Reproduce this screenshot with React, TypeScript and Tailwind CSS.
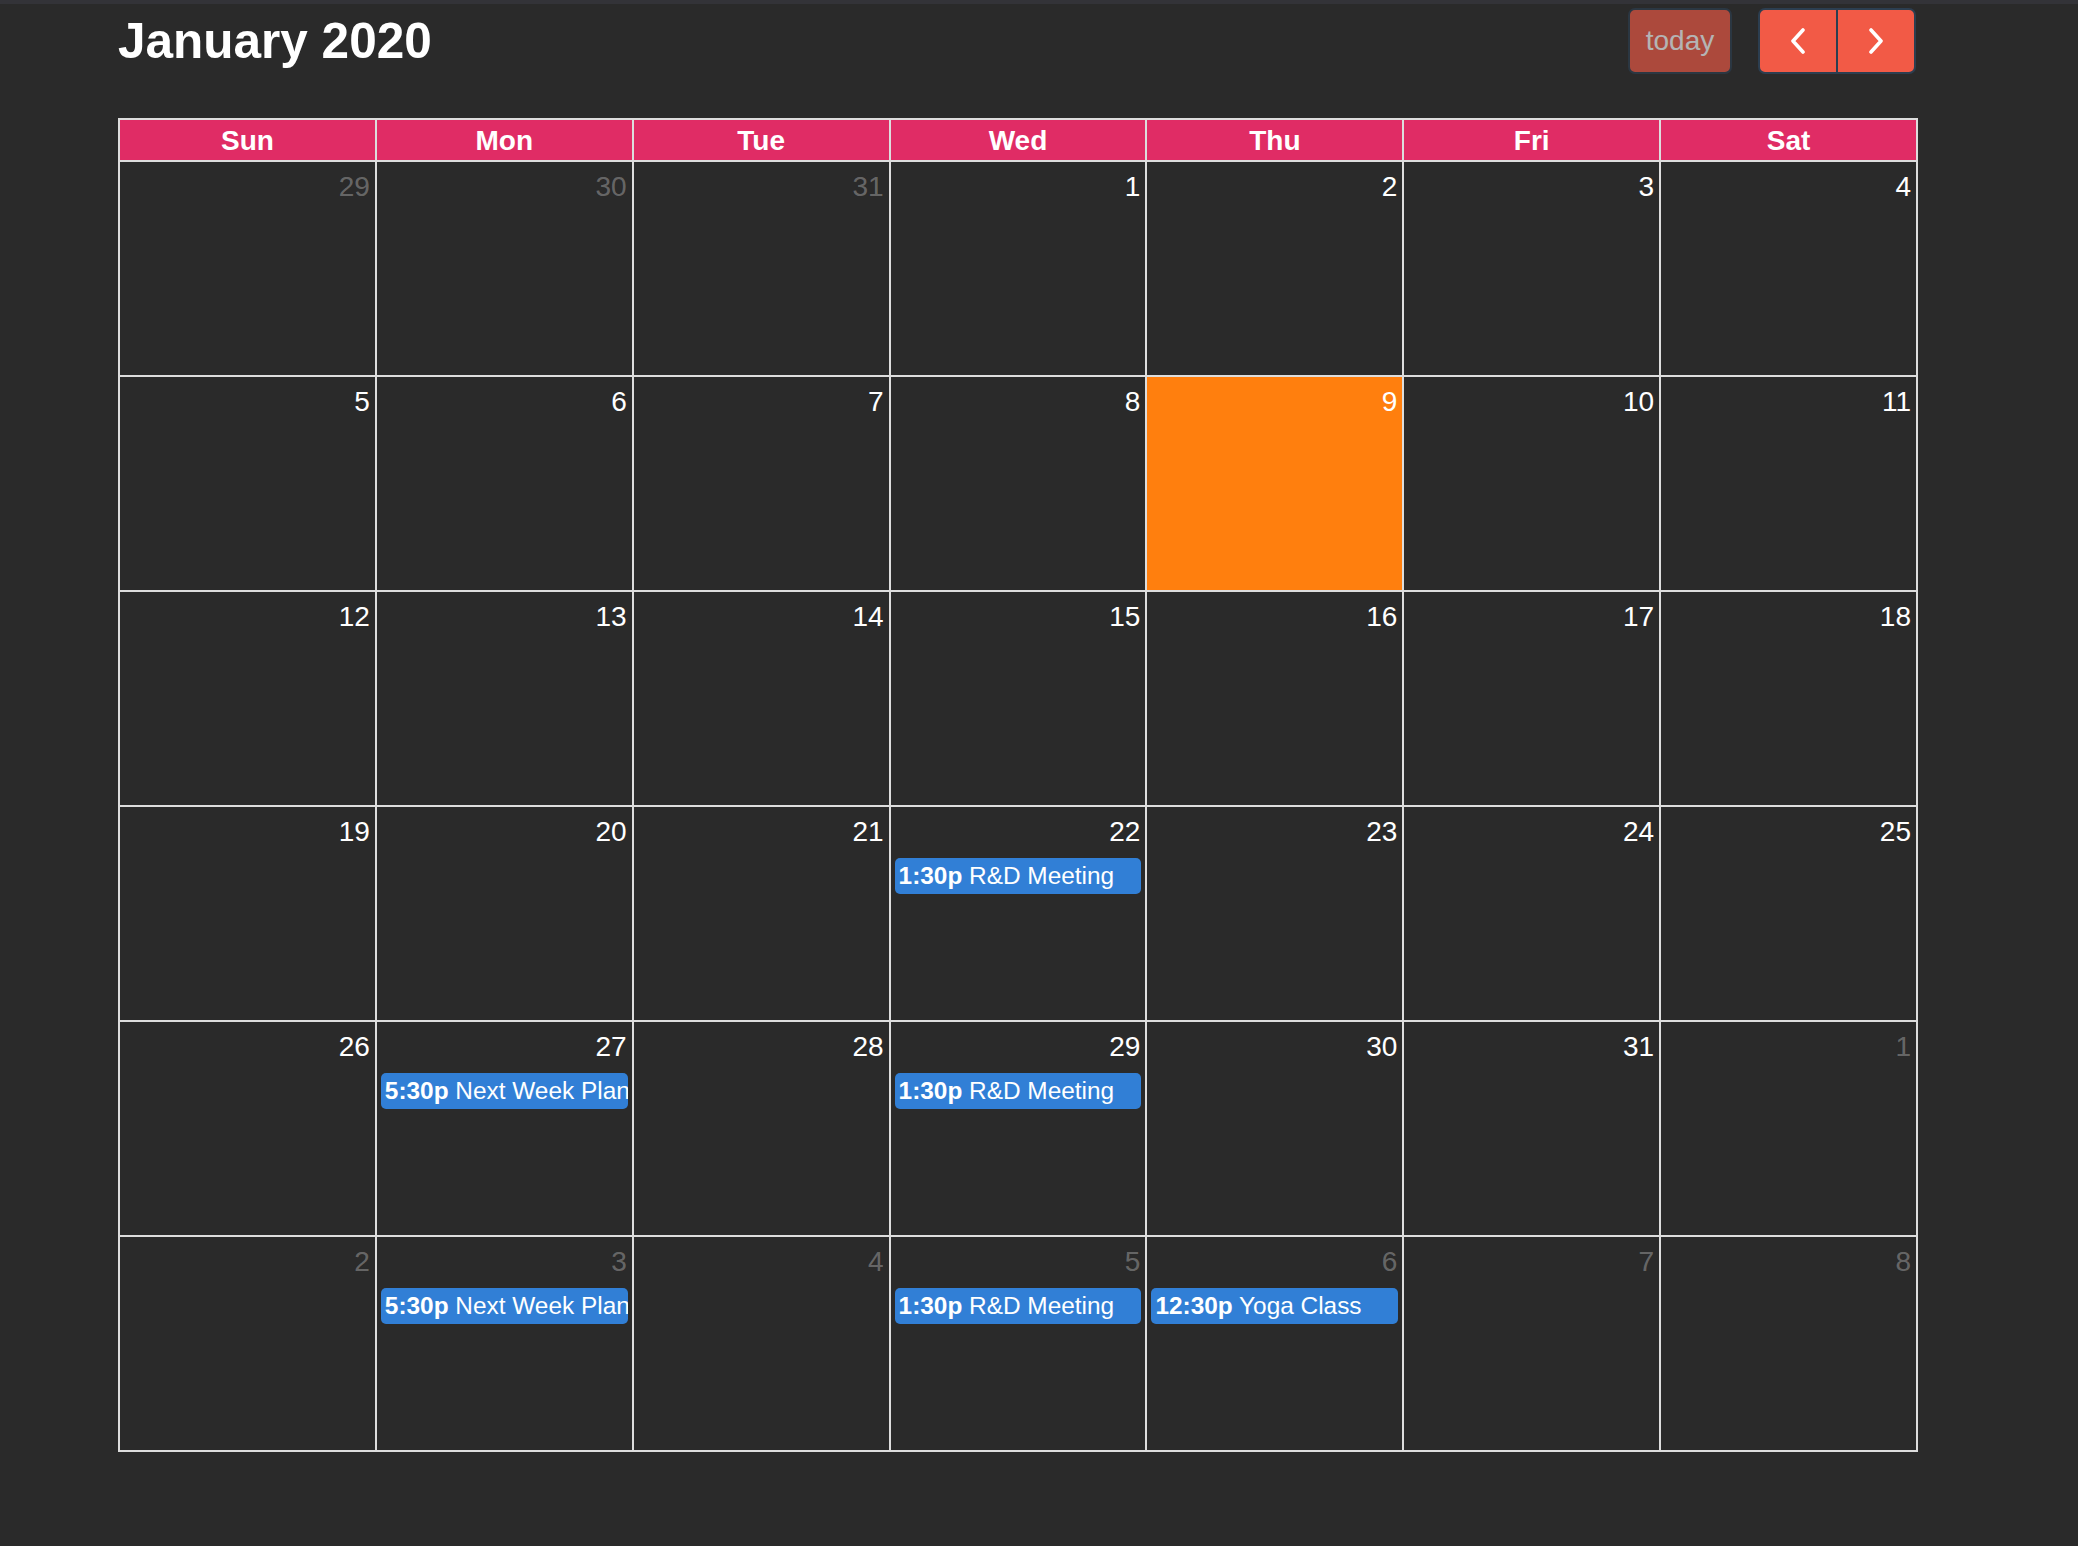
import React from "react";

type Ev = { time: string; title: string };
type Day = { n: number; other?: boolean; today?: boolean; events?: Ev[] };

const rd: Ev = { time: "1:30p", title: "R&D Meeting" };
const nw: Ev = { time: "5:30p", title: "Next Week Planning" };
const yoga: Ev = { time: "12:30p", title: "Yoga Class" };

const weeks: Day[][] = [
  [{ n: 29, other: true }, { n: 30, other: true }, { n: 31, other: true }, { n: 1 }, { n: 2 }, { n: 3 }, { n: 4 }],
  [{ n: 5 }, { n: 6 }, { n: 7 }, { n: 8 }, { n: 9, today: true }, { n: 10 }, { n: 11 }],
  [{ n: 12 }, { n: 13 }, { n: 14 }, { n: 15 }, { n: 16 }, { n: 17 }, { n: 18 }],
  [{ n: 19 }, { n: 20 }, { n: 21 }, { n: 22, events: [rd] }, { n: 23 }, { n: 24 }, { n: 25 }],
  [{ n: 26 }, { n: 27, events: [nw] }, { n: 28 }, { n: 29, events: [rd] }, { n: 30 }, { n: 31 }, { n: 1, other: true }],
  [
    { n: 2, other: true },
    { n: 3, other: true, events: [nw] },
    { n: 4, other: true },
    { n: 5, other: true, events: [rd] },
    { n: 6, other: true, events: [yoga] },
    { n: 7, other: true },
    { n: 8, other: true },
  ],
];

const days = ["Sun", "Mon", "Tue", "Wed", "Thu", "Fri", "Sat"];

function Chevron({ dir }: { dir: "left" | "right" }) {
  return (
    <svg width="16" height="26" viewBox="0 0 16 26" fill="none">
      <polyline
        points={dir === "left" ? "13,2 3,13 13,24" : "3,2 13,13 3,24"}
        stroke="white"
        strokeWidth="3.6"
        strokeLinecap="round"
        strokeLinejoin="round"
      />
    </svg>
  );
}

export default function App() {
  return (
    <div
      className="min-h-[1546px] w-full bg-[#2a2a2a] text-white"
      style={{ fontFamily: '"Liberation Sans", Arial, sans-serif' }}
    >
      <div className="h-[4px] bg-[#333338]" />
      <div className="ml-[118px] w-[1800px]">
        <div className="flex items-start justify-between pt-[4px]">
          <h2 className="mt-[5px] text-[49.5px] font-bold leading-[56px]">January 2020</h2>
          <div className="flex items-start pr-[2px]">
            <button className="h-[66px] w-[104px] rounded-[7px] border-2 border-[#2c3e50] bg-[#f25a46] text-[28px] text-white opacity-65">
              today
            </button>
            <div className="ml-[26px] flex">
              <button className="flex h-[66px] w-[80px] items-center justify-center rounded-l-[7px] border-2 border-[#2c3e50] bg-[#f25a46]">
                <Chevron dir="left" />
              </button>
              <button className="-ml-[2px] flex h-[66px] w-[80px] items-center justify-center rounded-r-[7px] border-2 border-[#2c3e50] bg-[#f25a46]">
                <Chevron dir="right" />
              </button>
            </div>
          </div>
        </div>

        <div className="mt-[44px] border-l-2 border-t-2 border-[#dddddd]">
          <div className="grid grid-cols-7">
            {days.map((d) => (
              <div
                key={d}
                className="flex h-[42px] items-center justify-center border-b-2 border-r-2 border-[#dddddd] bg-[#e02c65] pt-[2px] text-[28px] font-bold leading-[32px]"
              >
                {d}
              </div>
            ))}
          </div>
          {weeks.map((w, wi) => (
            <div key={wi} className="grid grid-cols-7">
              {w.map((d, di) => (
                <div
                  key={di}
                  className={
                    "h-[215px] min-w-0 border-b-2 border-r-2 border-[#dddddd] " +
                    (d.today ? "bg-[#ff7f0e]" : "")
                  }
                >
                  <div
                    className={
                      "pr-[5px] pt-[9px] text-right text-[28px] leading-[32px] " +
                      (d.other ? "text-white/30" : "text-white")
                    }
                  >
                    {d.n}
                  </div>
                  {d.events?.map((e, ei) => (
                    <div
                      key={ei}
                      className="mx-[4px] mt-[10px] h-[36px] overflow-hidden whitespace-nowrap rounded-[5px] bg-[#317fd6] pl-[4px] text-[24.4px] leading-[36px] text-white"
                    >
                      <span className="font-bold">{e.time}</span> {e.title}
                    </div>
                  ))}
                </div>
              ))}
            </div>
          ))}
        </div>
      </div>
    </div>
  );
}
